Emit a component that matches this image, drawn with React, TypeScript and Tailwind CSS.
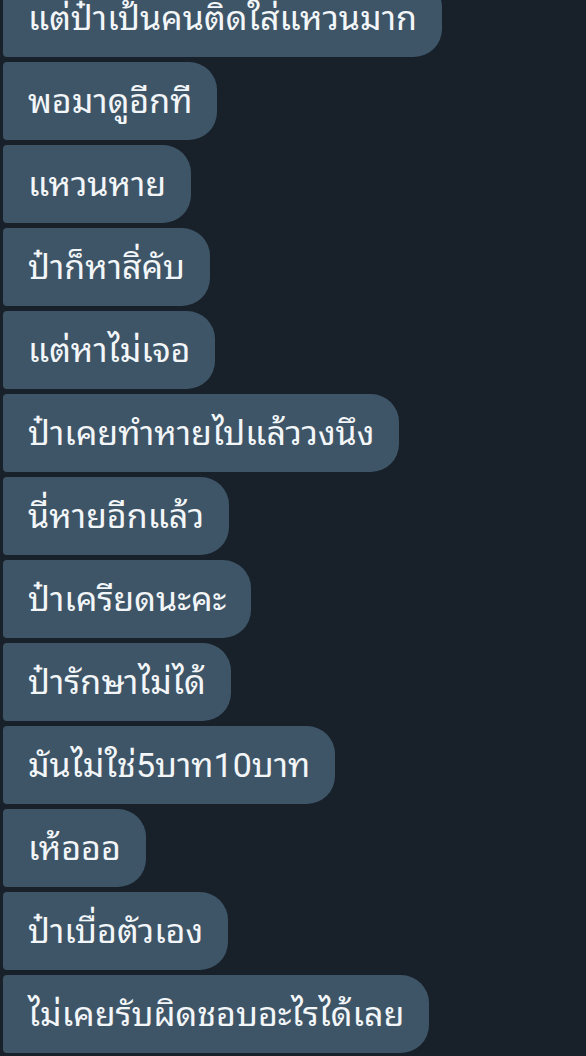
const messages = [
  'แต่ป๋าเป้นคนติดใส่แหวนมาก',
  'พอมาดูอีกที',
  'แหวนหาย',
  'ป๋าก็หาสิ่คับ',
  'แต่หาไม่เจอ',
  'ป๋าเคยทำหายไปแล้ววงนึง',
  'นี่หายอีกแล้ว',
  'ป๋าเครียดนะคะ',
  'ป๋ารักษาไม่ได้',
  'มันไม่ใช่5บาท10บาท',
  'เห้อออ',
  'ป๋าเบื่อตัวเอง',
  'ไม่เคยรับผิดชอบอะไรได้เลย',
];

export default function App() {
  return (
    <div
      className="w-[586px] h-[1056px] overflow-hidden bg-[#18212a]"
      style={{ fontFamily: 'Roboto, "Noto Sans Thai Looped", "Noto Sans Thai UI", "Noto Sans Thai", sans-serif' }}
    >
      <div className="flex flex-col items-start gap-[5px] pl-[3px] -mt-[21px]">
        {messages.map((m, i) => (
          <div
            key={i}
            className="h-[78px] flex items-center px-[25px] bg-[#3e5567] text-[#f3f6f8] text-[34px] rounded-r-[28px] rounded-l-[4px] whitespace-nowrap"
          >
            {m}
          </div>
        ))}
      </div>
    </div>
  );
}
